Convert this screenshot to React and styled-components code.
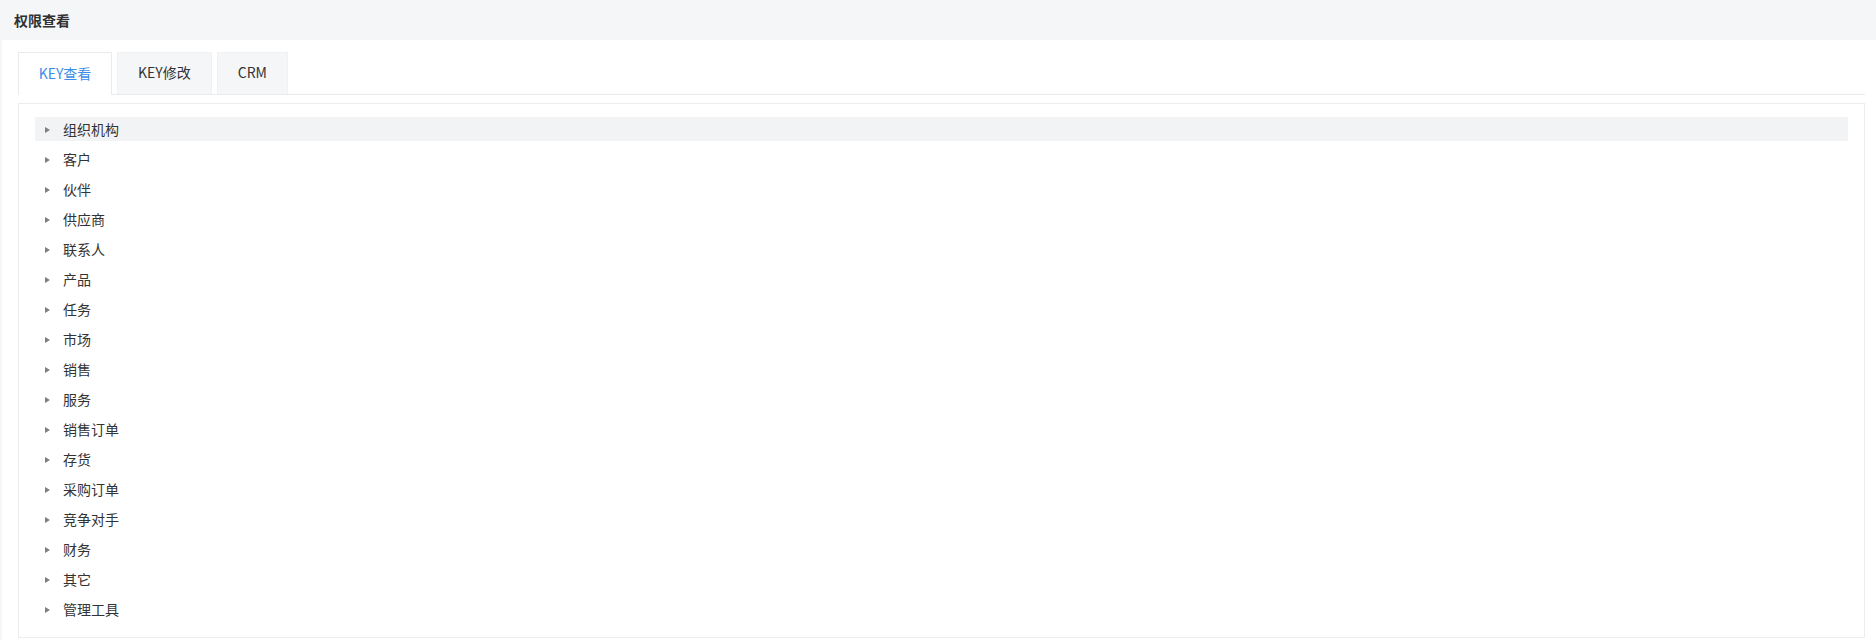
import React, { useState } from 'react';
import styled, { createGlobalStyle } from 'styled-components';

const GlobalStyle = createGlobalStyle`
    body {
        margin: 0;
        background: #f5f6f8;
        font-family: "Microsoft YaHei", "Noto Sans CJK SC", "Liberation Sans", sans-serif;
        color: #333;
    }
`

const tabs = ['KEY查看', 'KEY修改', 'CRM'];

const nodes = [
    '组织机构', '客户', '伙伴', '供应商', '联系人', '产品', '任务', '市场', '销售',
    '服务', '销售订单', '存货', '采购订单', '竞争对手', '财务', '其它', '管理工具',
];

const App = () => {
    const [active, setActive] = useState(0);
    const [hover, setHover] = useState(0);

    return (
        <Page>
            <GlobalStyle />
            <Header>权限查看</Header>
            <Panel>
                <TabBar>
                    {tabs.map((t, i) => (
                        <Tab key={t} active={i === active} onClick={() => setActive(i)}>{t}</Tab>
                    ))}
                </TabBar>
                <TreeCard>
                    {nodes.map((n, i) => (
                        <Node key={n} highlighted={i === hover} onMouseEnter={() => setHover(i)}>
                            <Caret />
                            <Label>{n}</Label>
                        </Node>
                    ))}
                </TreeCard>
            </Panel>
        </Page>
    );
};

export default App;

const Page = styled.div`
    width: 1876px;
    height: 640px;
    overflow: hidden;
`

const Header = styled.div`
    height: 40px;
    display: flex;
    align-items: center;
    padding-left: 14px;
    font-size: 14px;
    font-weight: 700;
    color: #303133;
`

const Panel = styled.div`
    margin-left: 2px;
    background: #fff;
    height: 600px;
    padding: 12px 11px 0 16px;
    box-sizing: border-box;
`

const TabBar = styled.div`
    display: flex;
    gap: 5px;
    height: 42px;
    border-bottom: 1px solid #e9ebef;
`

const Tab = styled.div`
    width: ${props => props.active ? '94px' : 'auto'};
    padding: 0 ${props => props.active ? '0' : '20px'} 3px;
    min-width: 54px;
    display: flex;
    align-items: center;
    justify-content: center;
    font-size: 14px;
    cursor: pointer;
    box-sizing: border-box;
    color: ${props => props.active ? '#3a8ee6' : '#333'};
    background: ${props => props.active ? '#fff' : '#f5f6f8'};
    border: 1px solid ${props => props.active ? '#e9ebef' : '#f0f1f4'};
    border-bottom: none;
    margin-bottom: ${props => props.active ? '-1px' : '0'};
    height: ${props => props.active ? '43px' : '42px'};
`

const TreeCard = styled.div`
    margin-top: 8px;
    border: 1px solid #ebedf0;
    padding: 13px 16px 16px 16px;
    display: flex;
    flex-direction: column;
    gap: 6px;
`

const Node = styled.div`
    height: 24px;
    display: flex;
    align-items: center;
    padding-left: 10px;
    background: ${props => props.highlighted ? '#f2f3f5' : 'transparent'};
    cursor: pointer;
`

const Caret = styled.span`
    width: 0;
    height: 0;
    margin-top: 2px;
    border-top: 3.5px solid transparent;
    border-bottom: 3.5px solid transparent;
    border-left: 5px solid #7f7f7f;
    margin-right: 13px;
`

const Label = styled.span`
    font-size: 14px;
    color: #333;
`
